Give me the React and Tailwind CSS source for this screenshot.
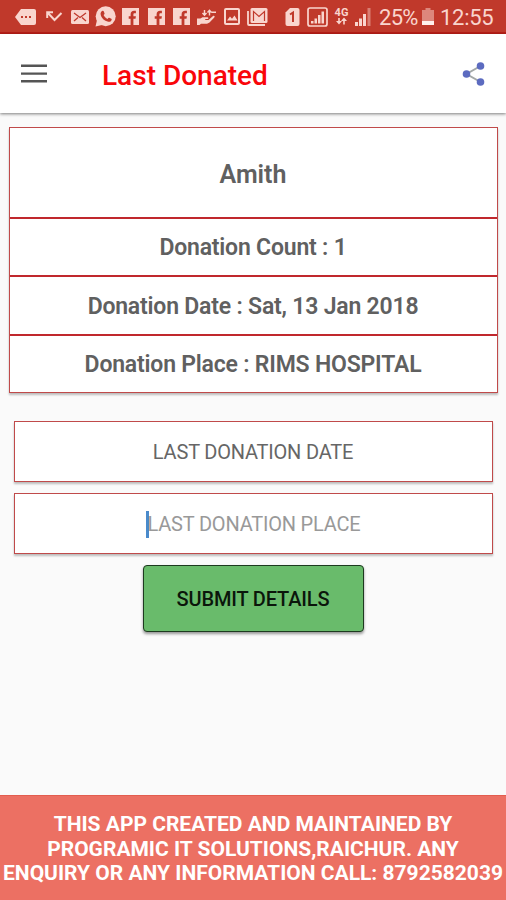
import React from "react";

const FacebookIcon = ({ className }) => (
  <svg className={`shrink-0 ${className}`} width="17" height="17" viewBox="0 0 17 17">
    <path d="M0 0h17v17H0z" fill="#f9d5ce" />
    <path
      d="M8.6 17v-6.2H6.7V8.2h1.9V6.4c0-2.4 1.3-3.6 3.5-3.6h1.8v2.5h-1.2c-1 0-1.3.5-1.3 1.3v1.6h2.5l-.4 2.6h-2.1V17z"
      fill="#c0392b"
    />
  </svg>
);

const StatusBar = () => (
  <div className="flex h-[34px] items-center border-b-2 border-[#b81f18] bg-[#c0392b] pt-px text-[#f9d5ce]">
    {/* message */}
    <svg className="ml-[15px] shrink-0" width="21" height="16" viewBox="0 0 21 16">
      <path d="M6 0h13a2 2 0 0 1 2 2v12a2 2 0 0 1-2 2H6L0 8z" fill="currentColor" />
      <path d="M6 7h2v2H6zM10 7h2v2h-2zM14 7h2v2h-2z" fill="#c0392b" />
    </svg>
    {/* missed call */}
    <svg className="ml-[10px] shrink-0" width="17" height="12" viewBox="0 0 17 12" fill="none" stroke="currentColor">
      <path d="M1.2 7V1.2H7M1.5 1.5l7 7.5 7-7" strokeWidth="2" />
    </svg>
    {/* mail */}
    <svg className="ml-2 shrink-0" width="18" height="14" viewBox="0 0 18 14">
      <rect width="18" height="14" rx="1.5" fill="currentColor" />
      <path d="M3 3l6 4.5L15 3M3 11l4-3.5M15 11l-4-3.5" fill="none" stroke="#c0392b" strokeWidth="1.3" />
    </svg>
    {/* whatsapp */}
    <svg className="ml-[6px] shrink-0" width="21" height="21" viewBox="0 0 21 21">
      <circle cx="10.7" cy="10.2" r="10" fill="currentColor" />
      <path d="M.5 20.5L2 14l5 5z" fill="currentColor" />
      <path
        d="M7.6 4.8c.5-.2.9 0 1.1.5l.8 1.9c.2.5 0 .9-.9 1.8.9 1.9 2 3 4 3.9.9-1.1 1.2-1.3 1.7-1.1l2 1c.5.3.5.6.3 1.2-.5 1.5-1.9 2.1-3.3 1.8C9.3 15 6.3 12.1 5.6 8.3c-.3-1.5.6-2.9 2-3.5z"
        fill="#c0392b"
      />
    </svg>
    <FacebookIcon className="ml-[6px]" />
    <FacebookIcon className="ml-[9px]" />
    <FacebookIcon className="ml-2" />
    {/* hand with sync arrows */}
    <svg className="ml-[7px] shrink-0" width="19" height="16" viewBox="0 0 19 16">
      <path
        d="M0 9.5h3.5l2-1.2h5c1.2 0 1.2 1.8 0 1.8H8l.5.8h3L16 7.100c1.300-.8 2.200.3 1.300 1.300L12.500 13.500 10 14.800H4L2.500 16H0z"
        fill="currentColor"
      />
      <path
        d="M7.500 1v5M5.500 4l2 2.300L9.500 4M12.500 6.500V1.500M10.500 3.500l2-2.300 2 2.300M14.500 3.200H19"
        fill="none"
        stroke="currentColor"
        strokeWidth="1.4"
      />
    </svg>
    {/* picture */}
    <svg className="ml-2 shrink-0" width="16" height="17" viewBox="0 0 16 17">
      <rect x="1" y="1" width="14" height="15" rx="1" fill="none" stroke="currentColor" strokeWidth="2" />
      <path d="M3 12.5l3-4 2 2.200 2.500-3.200 3 5z" fill="currentColor" />
    </svg>
    {/* gmail stack */}
    <svg className="ml-[7px] shrink-0" width="21" height="18" viewBox="0 0 21 18">
      <path d="M1 3v13a1 1 0 0 0 1 1h16" fill="none" stroke="currentColor" strokeWidth="1.8" />
      <rect x="3.5" width="17" height="15" rx="1.5" fill="currentColor" />
      <path d="M6.500 13V3.500L12 8.500l5.500-5V13" fill="none" stroke="#c0392b" strokeWidth="1.200" />
    </svg>
    {/* sim 1 */}
    <svg className="ml-[17px] shrink-0" width="15" height="18" viewBox="0 0 14 18">
      <path d="M4.500 0H12a2 2 0 0 1 2 2v14a2 2 0 0 1-2 2H2a2 2 0 0 1-2-2V4.500z" fill="currentColor" />
      <path d="M4.500 6.500L7.500 4.500V14" fill="none" stroke="#c0392b" strokeWidth="2" />
    </svg>
    {/* boxed signal */}
    <svg className="ml-[7px] shrink-0" width="21" height="20" viewBox="0 0 21 20">
      <rect x="1" y="1" width="19" height="18" rx="2" fill="none" stroke="currentColor" strokeWidth="1.7" />
      <path d="M4 14h2.500v2.500H4zM7.500 11.500H10v5H7.500zM11 8h2.500v8.500H11zM14.500 4.500H17v12h-2.500z" fill="currentColor" />
    </svg>
    <div className="ml-[6px] flex w-[15px] shrink-0 flex-col items-center">
      <span className="text-[11px] leading-[9px] font-bold">4G</span>
      <svg width="11" height="8" viewBox="0 0 11 8" fill="currentColor">
        <path d="M2.200 1h1.600v3H6L3 7.500 0 4h2.200zM7.200 7.500h1.600V4H11L8 .5 5 4h2.200z" />
      </svg>
    </div>
    {/* signal */}
    <svg className="ml-[6px] shrink-0" width="16" height="18" viewBox="0 0 16 18" fill="currentColor">
      <path d="M0 14h3v4H0zM4 10.500h3V18H4zM8 6h3v12H8z" />
      <path d="M12.500 0h3v18h-3z" opacity=".45" />
    </svg>
    <span className="ml-[8px] w-[39px] shrink-0 pt-[2px] text-[22px] leading-6 tracking-[-0.7px] whitespace-nowrap">25%</span>
    {/* battery */}
    <svg className="ml-[4px] shrink-0" width="12" height="17" viewBox="0 0 12 17" fill="currentColor">
      <path d="M3.500 0h5v2H12v11H0V2h3.500z" opacity=".5" />
      <path d="M0 13h12v4H0z" fill="#fff0ec" />
    </svg>
    <span className="ml-[6px] pt-[2px] text-[22px] leading-6 tracking-[-0.3px] whitespace-nowrap">12:55</span>
  </div>
);

const Header = () => (
  <header className="relative flex h-[79px] items-center bg-white shadow-[0_1px_3px_rgba(0,0,0,0.5)]">
    <button className="ml-[21px]" aria-label="Menu">
      <svg width="26" height="20" viewBox="0 0 26 20" fill="none" stroke="#555" strokeWidth="2.4">
        <path d="M0 1.800h26M0 9.600h26M0 17.200h26" />
      </svg>
    </button>
    <h1 className="ml-[55px] pt-[5px] text-[28px] leading-8 font-medium text-[#f9060a]">Last Donated</h1>
    <button className="mr-[21px] ml-auto" aria-label="Share">
      <svg width="23" height="24" viewBox="0 0 23 24">
        <path d="M18.500 4L4.500 12l14 8" fill="none" stroke="#a3a8a8" strokeWidth="2" />
        <g fill="#5c6bc0">
          <circle cx="4.500" cy="12" r="3.800" />
          <circle cx="18.500" cy="4" r="3.800" />
          <circle cx="18.500" cy="20" r="3.800" />
        </g>
      </svg>
    </button>
  </header>
);

const details = ["Donation Count : 1", "Donation Date : Sat, 13 Jan 2018", "Donation Place : RIMS HOSPITAL"];

const App = () => {
  return (
    <div className="flex h-[900px] w-[506px] flex-col overflow-hidden bg-[#fafafa] font-[Roboto,sans-serif]">
      <StatusBar />
      <Header />

      <main className="flex flex-1 flex-col items-center pt-[14px]">
        <section className="w-[489px] border border-solid border-[#c04a4a] bg-white text-center text-[23px] font-semibold tracking-[-0.2px] text-[#606060] shadow-[0_2px_2px_rgba(0,0,0,0.25)]">
          <div className="flex h-[88.500px] items-center justify-center pt-[5px] text-[25px] tracking-normal">Amith</div>
          {details.map((detail) => (
            <div
              key={detail}
              className="flex h-[58.500px] items-center justify-center border-t-2 border-[#c0282d] pt-[3px]"
            >
              {detail}
            </div>
          ))}
        </section>

        <div className="mt-[27.500px] flex h-[61px] w-[479px] items-center justify-center border border-[#c04a4a] bg-white pt-[2px] text-[20px] tracking-[-0.2px] text-[#666] shadow-[0_2px_2px_rgba(0,0,0,0.25)]">
          LAST DONATION DATE
        </div>
        <div className="mt-[11px] flex h-[61px] w-[479px] items-center justify-center border border-[#c04a4a] bg-white pt-[2px] text-[20px] tracking-[-0.2px] text-[#999] shadow-[0_2px_2px_rgba(0,0,0,0.25)]">
          <span className="-mr-px h-[27px] w-[3px] bg-[#4a8acb]" />
          LAST DONATION PLACE
        </div>

        <button className="mt-[11px] h-[67px] w-[221px] rounded-[4px] border-[1.500px] border-[#1d3a1f] bg-[#69bb6b] pt-[2px] text-[20px] font-medium tracking-[-0.15px] text-[#0b160b] shadow-[0_2px_3px_rgba(0,0,0,0.4)]">
          SUBMIT DETAILS
        </button>
      </main>

      <footer className="h-[105px] border-t border-[#e35d4f] bg-[#ec7063] pt-[16px] text-center text-[21px] leading-[24.500px] font-bold whitespace-nowrap text-white">
        <p>THIS APP CREATED AND MAINTAINED BY</p>
        <p>PROGRAMIC IT SOLUTIONS,RAICHUR. ANY</p>
        <p>ENQUIRY OR ANY INFORMATION CALL: 8792582039</p>
      </footer>
    </div>
  );
};

export default App;
